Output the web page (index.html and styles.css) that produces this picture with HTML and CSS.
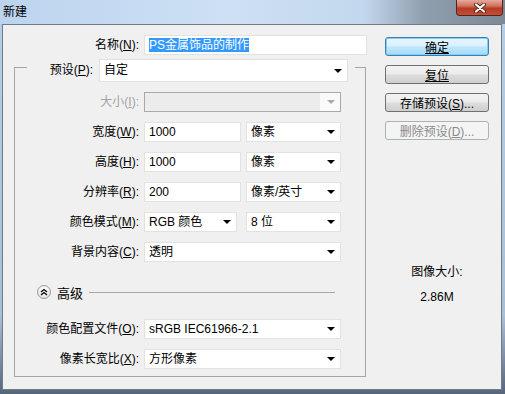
FILE: index.html
```html
<!DOCTYPE html>
<html lang="zh-CN">
<head>
  <meta charset="UTF-8">
  <title>新建</title>
  <link rel="stylesheet" href="styles.css">
</head>
<body>

<div class="window">
  <div class="titlebar">
    <span class="title">新建</span>
    <span class="close">
      <svg width="14" height="10" viewBox="0 0 14 10">
        <path d="M3,1.5 L11,8.5 M11,1.5 L3,8.5" stroke="#4a2a24" stroke-width="4" stroke-linecap="round"/>
        <path d="M3,1.5 L11,8.5 M11,1.5 L3,8.5" stroke="#fff" stroke-width="2.2" stroke-linecap="round"/>
      </svg>
    </span>
  </div>

  <div class="dialog">
    <div class="left">
      <div class="name-row">
        <label class="label">名称(<u>N</u>):</label>
        <div class="input name"><span class="selected">PS金属饰品的制作</span></div>
      </div>

      <fieldset class="group">
        <legend class="preset">
          <label class="label">预设(<u>P</u>):</label>
          <div class="select preset-select">自定</div>
        </legend>

        <label class="label disabled">大小(<u>I</u>):</label>
        <div class="select wide off"></div>

        <label class="label">宽度(<u>W</u>):</label>
        <div class="input">1000</div>
        <div class="select">像素</div>

        <label class="label">高度(<u>H</u>):</label>
        <div class="input">1000</div>
        <div class="select">像素</div>

        <label class="label">分辨率(<u>R</u>):</label>
        <div class="input">200</div>
        <div class="select">像素/英寸</div>

        <label class="label">颜色模式(<u>M</u>):</label>
        <div class="select narrow">RGB 颜色</div>
        <div class="select">8 位</div>

        <label class="label">背景内容(<u>C</u>):</label>
        <div class="select wide">透明</div>

        <div class="advanced">
          <span class="toggle">
            <svg width="8" height="8" viewBox="0 0 8 8">
              <path d="M1,4 L4,1.5 L7,4 M1,7 L4,4.5 L7,7" fill="none" stroke="#000" stroke-width="1.3"/>
            </svg>
          </span>
          <span>高级</span>
          <span class="rule"></span>
        </div>

        <label class="label profile">颜色配置文件(<u>O</u>):</label>
        <div class="select wide profile">sRGB IEC61966-2.1</div>

        <label class="label">像素长宽比(<u>X</u>):</label>
        <div class="select wide">方形像素</div>
      </fieldset>
    </div>

    <div class="right">
      <button class="btn default"><u>确定</u></button>
      <button class="btn"><u>复位</u></button>
      <button class="btn">存储预设(<u>S</u>)...</button>
      <button class="btn" disabled>删除预设(<u>D</u>)...</button>

      <div class="info">
        <div>图像大小:</div>
        <div class="size">2.86M</div>
      </div>
    </div>
  </div>
</div>

</body>
</html>
```

FILE: styles.css
```css
body{
  margin: 0;
  overflow: hidden;
  font-family: "Liberation Sans", "Noto Sans CJK SC", sans-serif;
  font-size: 12px;
  color: #000;
}

.window{
  width: 505px;
  height: 394px;
  display: flex;
  flex-direction: column;
  background: linear-gradient(to bottom, #b8cde6 0%, #a9bfd8 80%, #55657a 100%);
}

/* 标题栏 */
.titlebar{
  height: 24px;
  display: flex;
  align-items: flex-start;
  background: linear-gradient(to right, #bdd4ef 0%, #cde0f4 45%, #c3d7ee 72%, #8f9eae 84%, #7c8895 100%);
}

.title{
  line-height: 24px;
  padding-left: 3px;
}

.close{
  margin-left: auto;
  margin-right: 2px;
  width: 45px;
  height: 15px;
  display: flex;
  align-items: center;
  justify-content: center;
  border: 1px solid #5b2119;
  border-top: none;
  border-radius: 0 0 4px 4px;
  background: linear-gradient(to bottom, #e6a99c 0%, #d2705f 40%, #b73a22 55%, #c2503a 100%);
}

/* 对话框主体 */
.dialog{
  flex: 1;
  margin: 0 3px 4px 2px;
  display: flex;
  border: 1px solid #6f7c8a;
  background: #f0f0f0;
}

.left{
  width: 382px;
}

.label{
  text-align: right;
  line-height: 20px;
  white-space: nowrap;
}

.disabled{
  color: #a3a3a3;
}

.name-row{
  display: flex;
  gap: 5px;
  padding-top: 10px;
}

.name-row .label{
  width: 136px;
}

.input{
  height: 20px;
  box-sizing: border-box;
  padding: 0 4px;
  line-height: 18px;
  background: #fff;
  border: 1px solid #e2e2e2;
}

.input.name{
  width: 223px;
}

.selected{
  background: #3399ff;
  color: #fff;
}

.select{
  position: relative;
  height: 20px;
  box-sizing: border-box;
  padding: 0 4px;
  line-height: 18px;
  background: #fff;
  border: 1px solid #e2e2e2;
}

.select::after{
  content: "";
  position: absolute;
  right: 5px;
  top: 7px;
  border-left: 4px solid transparent;
  border-right: 4px solid transparent;
  border-top: 4px solid #000;
}

.select.off{
  background: linear-gradient(to right, #ececec 0, #ececec 175px, #fafafa 175px);
  border-color: #a9a9a9;
}

.select.off::after{
  border-top-color: #a9a9a9;
}

.wide{
  grid-column: 2 / 4;
}

.narrow{
  width: 93px;
}

.profile{
  margin-top: 7px;
}

/* 预设分组 */
.group{
  margin: 4px 0 0 11px;
  width: 352px;
  box-sizing: border-box;
  padding: 17px 0 7px 0;
  border: 1px solid #a5a5a5;
  display: grid;
  grid-template-columns: 124px 97px 95px;
  column-gap: 5px;
  row-gap: 10px;
  align-content: start;
}

.preset{
  display: flex;
  align-items: flex-start;
  height: 16px;
  margin-left: 12px;
  padding: 0 7px 0 0;
}

.preset .label{
  width: 66px;
  line-height: 23px;
}

.preset-select{
  flex: none;
  width: 249px;
  height: 23px;
  margin-left: 6px;
  line-height: 21px;
}

.preset-select::after{
  top: 9px;
}

.advanced{
  grid-column: 1 / -1;
  display: flex;
  align-items: center;
  height: 20px;
  margin-top: 10px;
  padding-left: 22px;
  font-size: 13px;
}

.toggle{
  width: 12px;
  height: 12px;
  margin-right: 6px;
  display: flex;
  align-items: center;
  justify-content: center;
  border: 1px solid #9a9a9a;
  border-radius: 50%;
  background: radial-gradient(circle at 50% 35%, #ffffff 0%, #e9e9e9 70%, #d2d2d2 100%);
}

.rule{
  width: 246px;
  margin-left: 6px;
  border-top: 1px solid #a8a8a8;
}

/* 右侧按钮 */
.right{
  width: 104px;
  padding-top: 12px;
  display: flex;
  flex-direction: column;
  gap: 9px;
}

.btn{
  height: 19px;
  padding: 0;
  font: inherit;
  color: #000;
  border: 1px solid #707070;
  border-radius: 3px;
  background: linear-gradient(to bottom, #f3f3f3 0%, #ebebeb 48%, #dddddd 52%, #cfcfcf 100%);
}

.btn.default{
  border-color: #3c7fb1;
  box-shadow: inset 0 0 0 1px #7fd0f4;
  background: linear-gradient(to bottom, #eaf6fd 0%, #d9f0fc 48%, #bee6fd 52%, #a7d9f5 100%);
}

.btn:disabled{
  color: #8a8a8a;
  border-color: #adb2b5;
  background: #f4f4f4;
}

.info{
  margin-top: 116px;
  text-align: center;
  line-height: 14px;
}

.info .size{
  margin-top: 11px;
}
```
